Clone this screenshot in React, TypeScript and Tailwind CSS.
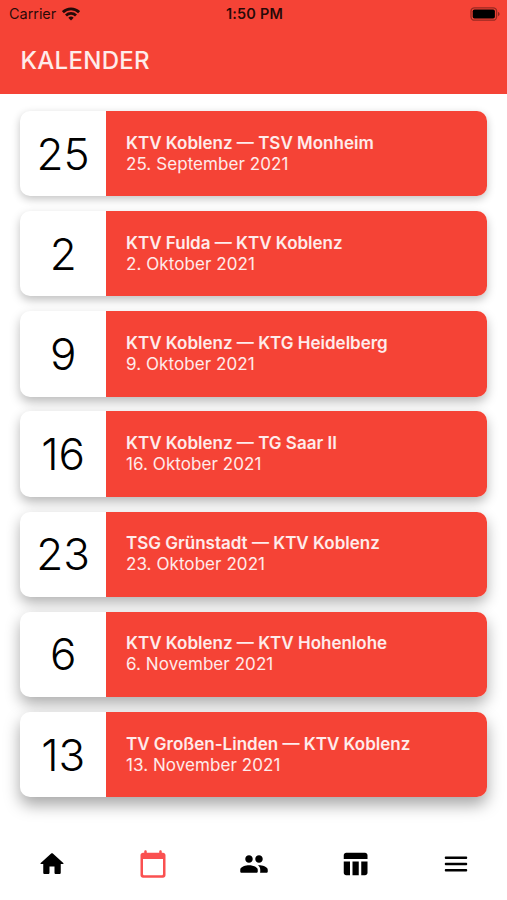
import clsx from 'clsx'

interface Match {
  day: number
  title: string
  date: string
  shadow: string
}

// elevation grows with the position in the list
const matches: Match[] = [
  { day: 25, title: 'KTV Koblenz — TSV Monheim', date: '25. September 2021', shadow: 'shadow-[0_3px_8px_rgba(0,0,0,0.24)]' },
  { day: 2, title: 'KTV Fulda — KTV Koblenz', date: '2. Oktober 2021', shadow: 'shadow-[0_4px_10px_rgba(0,0,0,0.25)]' },
  { day: 9, title: 'KTV Koblenz — KTG Heidelberg', date: '9. Oktober 2021', shadow: 'shadow-[0_5px_11px_rgba(0,0,0,0.27)]' },
  { day: 16, title: 'KTV Koblenz — TG Saar II', date: '16. Oktober 2021', shadow: 'shadow-[0_5px_12px_rgba(0,0,0,0.29)]' },
  { day: 23, title: 'TSG Grünstadt — KTV Koblenz', date: '23. Oktober 2021', shadow: 'shadow-[0_6px_14px_rgba(0,0,0,0.31)]' },
  { day: 6, title: 'KTV Koblenz — KTV Hohenlohe', date: '6. November 2021', shadow: 'shadow-[0_7px_15px_rgba(0,0,0,0.33)]' },
  { day: 13, title: 'TV Großen-Linden — KTV Koblenz', date: '13. November 2021', shadow: 'shadow-[0_8px_16px_rgba(0,0,0,0.35)]' },
]

const tabs = [
  {
    id: 'home',
    label: 'Start',
    path: 'M10 19v-5h4v5c0 .55.45 1 1 1h3c.55 0 1-.45 1-1v-7h1.7c.46 0 .68-.57.33-.87L12.67 3.6c-.38-.34-.96-.34-1.34 0l-8.36 7.53c-.34.3-.13.87.33.87H5v7c0 .55.45 1 1 1h3c.55 0 1-.45 1-1z',
  },
  {
    id: 'calendar',
    label: 'Kalender',
    path: 'M20 3h-1V2c0-.55-.45-1-1-1s-1 .45-1 1v1H7V2c0-.55-.45-1-1-1s-1 .45-1 1v1H4c-1.1 0-2 .9-2 2v16c0 1.1.9 2 2 2h16c1.1 0 2-.9 2-2V5c0-1.1-.9-2-2-2zm-1 18H5c-.55 0-1-.45-1-1V8h16v12c0 .55-.45 1-1 1z',
  },
  {
    id: 'team',
    label: 'Team',
    path: 'M16 11c1.66 0 2.99-1.34 2.99-3S17.66 5 16 5s-3 1.34-3 3 1.34 3 3 3zm-8 0c1.66 0 2.99-1.34 2.99-3S9.66 5 8 5 5 6.34 5 8s1.34 3 3 3zm0 2c-2.33 0-7 1.17-7 3.5V18c0 .55.45 1 1 1h12c.55 0 1-.45 1-1v-1.5c0-2.33-4.67-3.5-7-3.5zm8 0c-.29 0-.62.02-.97.05.02.01.03.03.04.04 1.14.83 1.93 1.94 1.93 3.41V18c0 .35-.07.69-.18 1H22c.55 0 1-.45 1-1v-1.5c0-2.33-4.67-3.5-7-3.5z',
  },
  {
    id: 'table',
    label: 'Tabelle',
    path: 'M10 10.02h5V21h-5V10.02zM17 21h3c1.1 0 2-.9 2-2v-9h-5v11zm3-18H5c-1.1 0-2 .9-2 2v3h19V5c0-1.1-.9-2-2-2zM3 19c0 1.1.9 2 2 2h3V10H3v9z',
  },
  {
    id: 'menu',
    label: 'Menü',
    path: 'M4 18h16c.55 0 1-.45 1-1s-.45-1-1-1H4c-.55 0-1 .45-1 1s.45 1 1 1zm0-5h16c.55 0 1-.45 1-1s-.45-1-1-1H4c-.55 0-1 .45-1 1s.45 1 1 1zM3 7c0 .55.45 1 1 1h16c.55 0 1-.45 1-1s-.45-1-1-1H4c-.55 0-1 .45-1 1z',
  },
]

function StatusBar() {
  return (
    <div className="grid h-[27px] grid-cols-3 items-center pl-[9px] pr-[7px] pt-px text-black/85">
      <div className="flex items-center gap-[5.5px]">
        <span className="text-[14.5px] leading-none tracking-[-0.05px]">Carrier</span>
        <svg viewBox="0 0 18 14" className="h-[14px] w-[18px]" fill="none" stroke="currentColor" strokeWidth="2.8">
          <path d="M0.9 5.2a11.5 11.5 0 0 1 16.2 0" />
          <path d="M4 8.5a7.1 7.1 0 0 1 10 0" />
          <path d="M9 13.6l-2.7-2.8a3.9 3.9 0 0 1 5.4 0z" fill="currentColor" stroke="none" />
        </svg>
      </div>
      <span className="text-center text-[14.5px] font-semibold leading-none tracking-[0.2px]">1:50 PM</span>
      <svg viewBox="0 0 30 14" className="h-[14px] w-[30px] justify-self-end">
        <rect x="1" y="0.8" width="25.6" height="12.4" rx="3.5" fill="none" stroke="currentColor" strokeOpacity="0.45" strokeWidth="1.3" />
        <rect x="2.7" y="2.5" width="22.2" height="9" rx="1.8" fill="black" />
        <path d="M28 5v4.2c1-.4 1.6-1.2 1.6-2.1s-.6-1.7-1.6-2.1z" fill="currentColor" fillOpacity="0.5" />
      </svg>
    </div>
  )
}

function MatchCard({ match }: { match: Match }) {
  return (
    <li className={clsx('flex h-[85.3px] overflow-hidden rounded-[10px] bg-white', match.shadow)}>
      <div className="flex w-[85.7px] shrink-0 items-center justify-center text-[44px] font-[350] leading-none text-black">
        {match.day}
      </div>
      <div className="flex flex-1 flex-col justify-center bg-[#f54336] pl-5 text-[17px] leading-[21px] text-white/90">
        <p className="whitespace-nowrap font-semibold">{match.title}</p>
        <p className="whitespace-nowrap tracking-[0.07px]">{match.date}</p>
      </div>
    </li>
  )
}

function TabBar({ active }: { active: string }) {
  return (
    <nav className="grid h-[72px] grid-cols-5 items-center bg-white pl-px">
      {tabs.map(tab => (
        <button
          key={tab.id}
          aria-label={tab.label}
          className={clsx('flex justify-center', tab.id === active ? 'text-[#fa5050]' : 'text-black')}
        >
          <svg viewBox="0 0 24 24" className="size-[30px]" fill="currentColor">
            <path d={tab.path} />
          </svg>
        </button>
      ))}
    </nav>
  )
}

export default function App() {
  return (
    <div className="flex h-[900px] w-[507px] flex-col overflow-hidden bg-white font-['Inter',sans-serif]">
      <header className="h-[93.5px] shrink-0 bg-[#f54336]">
        <StatusBar />
        <h1 className="pl-[20.5px] pt-[18.5px] text-[24px] font-medium leading-[30px] tracking-[0.3px] text-white/90">
          KALENDER
        </h1>
      </header>
      <main className="flex-1 pl-[20.3px] pr-[19.7px] pt-[17.4px]">
        <ul className="flex flex-col gap-[14.9px]">
          {matches.map(match => (
            <MatchCard key={match.title} match={match} />
          ))}
        </ul>
      </main>
      <TabBar active="calendar" />
    </div>
  )
}
